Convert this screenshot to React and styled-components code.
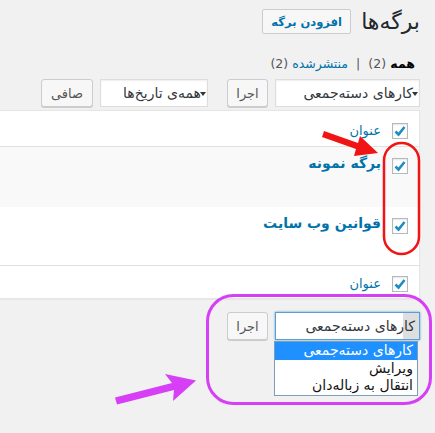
import React from 'react';
import styled, { createGlobalStyle } from 'styled-components';

const GlobalStyle = createGlobalStyle`
  html, body { margin: 0; padding: 0; background: #f1f1f1; }
  body { font-family: "DejaVu Sans", "Noto Sans", sans-serif; color: #23282d; direction: rtl; }
`;

const Page = styled.div`
  position: relative;
  width: 435px;
  height: 433px;
  overflow: hidden;
  box-sizing: border-box;
  padding: 9px 15px 0 0;
`;

const TitleRow = styled.div`
  display: flex;
  align-items: center;
  gap: 10px;
  height: 25px;
`;

const Title = styled.h1`
  margin: 0;
  font-size: 22px;
  font-weight: 400;
  line-height: 25px;
  color: #23282d;
`;

const AddButton = styled.a`
  display: inline-flex;
  align-items: center;
  justify-content: center;
  height: 25px;
  width: 89px;
  padding: 0;
  box-sizing: border-box;
  border: 1px solid #ccc;
  border-radius: 2px;
  background: #f7f7f7;
  color: #0073aa;
  font-size: 11.5px;
  font-weight: 700;
  white-space: nowrap;
  text-decoration: none;
`;

const Filters = styled.ul`
  display: flex;
  gap: 8px;
  list-style: none;
  margin: 20px 5px 0 0;
  padding: 0;
  font-size: 12.5px;
  line-height: 20px;
  color: #555;
`;

const FilterItem = styled.li`
  color: ${p => (p.current ? '#000' : '#0073aa')};
  font-weight: ${p => (p.current ? 700 : 400)};
  span { color: #555; font-weight: 400; }
`;

const Sep = styled.li` color: #555; `;

const Nav = styled.div`
  display: flex;
  align-items: center;
  height: 28px;
  margin-top: ${p => p.mt}px;
  position: relative;
`;

const Select = styled.div`
  position: relative;
  display: flex;
  align-items: center;
  width: ${p => p.w}px;
  height: 28px;
  box-sizing: border-box;
  margin-left: ${p => p.gap}px;
  background: #fff;
  border: 1px solid ${p => (p.focus ? '#5b9dd9' : '#ddd')};
  box-shadow: ${p => (p.focus ? '0 0 2px rgba(30,140,190,.8)' : 'inset 0 1px 2px rgba(0,0,0,.07)')};
  font-size: 14px;
  color: #32373c;
  white-space: nowrap;
`;

const Arrow = styled.span`
  flex: none;
  width: ${p => (p.box ? 16 : 8)}px;
  align-self: stretch;
  display: flex;
  align-items: center;
  justify-content: center;
  background: ${p => (p.box ? '#dedede' : 'transparent')};
  &::after {
    content: '';
    display: ${p => (p.box ? 'none' : 'block')};
    border-left: 3px solid transparent;
    border-right: 3px solid transparent;
    border-top: 4px solid #333;
    margin-top: 2px;
  }
`;

const SelectText = styled.span`
  margin-right: ${p => p.overlap || 0}px;
  position: relative;
`;

const Button = styled.span`
  display: inline-flex;
  align-items: center;
  justify-content: center;
  width: ${p => p.w}px;
  height: 28px;
  box-sizing: border-box;
  margin-left: ${p => p.gap || 0}px;
  border: 1px solid #ccc;
  border-radius: 3px;
  background: #f7f7f7;
  box-shadow: 0 1px 0 #ccc;
  color: #555;
  font-size: 13px;
`;

const Table = styled.div`
  margin-top: 3px;
  background: #fff;
  border: 1px solid #e5e5e5;
  border-left: none;
  box-shadow: 0 1px 1px rgba(0,0,0,.04);
`;

const Row = styled.div`
  display: flex;
  align-items: center;
  align-content: flex-start;
  height: ${p => p.h}px;
  box-sizing: border-box;
  padding: ${p => p.pt}px 11px 0 0;
  gap: 11px;
  background: ${p => (p.alt ? '#f9f9f9' : '#fff')};
  border-bottom: ${p => (p.line ? '1px solid #e1e1e1' : 'none')};
  & > * { align-self: flex-start; }
`;

const Box = styled.span`
  flex: none;
  width: 16px;
  height: 16px;
  box-sizing: border-box;
  border: 1px solid #b4b9be;
  background: #fff;
  box-shadow: inset 0 1px 2px rgba(0,0,0,.1);
  display: flex;
  align-items: center;
  justify-content: center;
`;

const HeadLabel = styled.span`
  font-size: 13px;
  line-height: 16px;
  color: #0073aa;
`;

const PageTitle = styled.a`
  font-size: 14px;
  font-weight: 700;
  line-height: 16px;
  margin-top: -3px;
  color: #0073aa;
  text-decoration: none;
`;

const Dropdown = styled.div`
  position: absolute;
  top: 28px;
  right: 1px;
  width: 144px;
  box-sizing: border-box;
  border: 1px solid #7f9db9;
  background: #fff;
  font-size: 14px;
  z-index: 2;
`;

const Option = styled.div`
  height: 17.5px;
  line-height: 17.5px;
  padding-right: 4px;
  white-space: nowrap;
  background: ${p => (p.active ? '#1e90ff' : '#fff')};
  color: ${p => (p.active ? '#fff' : '#111')};
`;

const Marks = styled.svg`
  position: absolute;
  top: 0;
  left: 0;
  pointer-events: none;
  z-index: 5;
`;

const Check = () => (
  <Box>
    <svg width="14" height="14" viewBox="0 0 14 14">
      <path d="M2.5 7.5 L5.5 10.5 L11.5 3" fill="none" stroke="#1e8cbe" strokeWidth="2.6" />
    </svg>
  </Box>
);

export default function App() {
  return (
    <>
      <GlobalStyle />
      <Page>
        <TitleRow>
          <Title>برگه‌ها</Title>
          <AddButton>افزودن برگه</AddButton>
        </TitleRow>

        <Filters>
          <FilterItem current>همه <span>(2)</span></FilterItem>
          <Sep>|</Sep>
          <FilterItem>منتشرشده <span>(2)</span></FilterItem>
        </Filters>

        <Nav mt={5}>
          <Select w={145} gap={7}>
            <Arrow />
            <SelectText overlap={-2}>کارهای دسته‌جمعی</SelectText>
          </Select>
          <Button w={41} gap={19}>اجرا</Button>
          <Select w={108} gap={7}>
            <Arrow />
            <SelectText overlap={-2}>همه‌ی تاریخ‌ها</SelectText>
          </Select>
          <Button w={52}>صافی</Button>
        </Nav>

        <Table>
          <Row h={36} pt={12} line>
            <Check />
            <HeadLabel>عنوان</HeadLabel>
          </Row>
          <Row h={60} pt={11} alt>
            <Check />
            <PageTitle>برگه نمونه</PageTitle>
          </Row>
          <Row h={59} pt={11} line>
            <Check />
            <PageTitle>قوانین وب سایت</PageTitle>
          </Row>
          <Row h={32} pt={10}>
            <Check />
            <HeadLabel>عنوان</HeadLabel>
          </Row>
        </Table>

        <Nav mt={13}>
          <Select w={145} gap={7} focus>
            <Arrow box />
            <SelectText overlap={-12}>کارهای دسته‌جمعی</SelectText>
            <Dropdown>
              <Option active>کارهای دسته‌جمعی</Option>
              <Option>ویرایش</Option>
              <Option>انتقال به زباله‌دان</Option>
            </Dropdown>
          </Select>
          <Button w={41}>اجرا</Button>
        </Nav>

        <Marks width="435" height="433" viewBox="0 0 435 433">
          <polygon
            points="324,131 358,143 360,136 378,153 354,156 356,149 322,137"
            fill="#f01414"
          />
          <rect x="384" y="143" width="35" height="111" rx="17.5" fill="none" stroke="#f01414" strokeWidth="2.5" />
          <rect x="207.5" y="295.5" width="223" height="108" rx="26" fill="none" stroke="#d63ff5" strokeWidth="3" />
          <polygon
            points="115,397.5 172,383 165,374 196,380.5 173,401 174,390 117,404.5"
            fill="#d63ff5"
          />
        </Marks>
      </Page>
    </>
  );
}
